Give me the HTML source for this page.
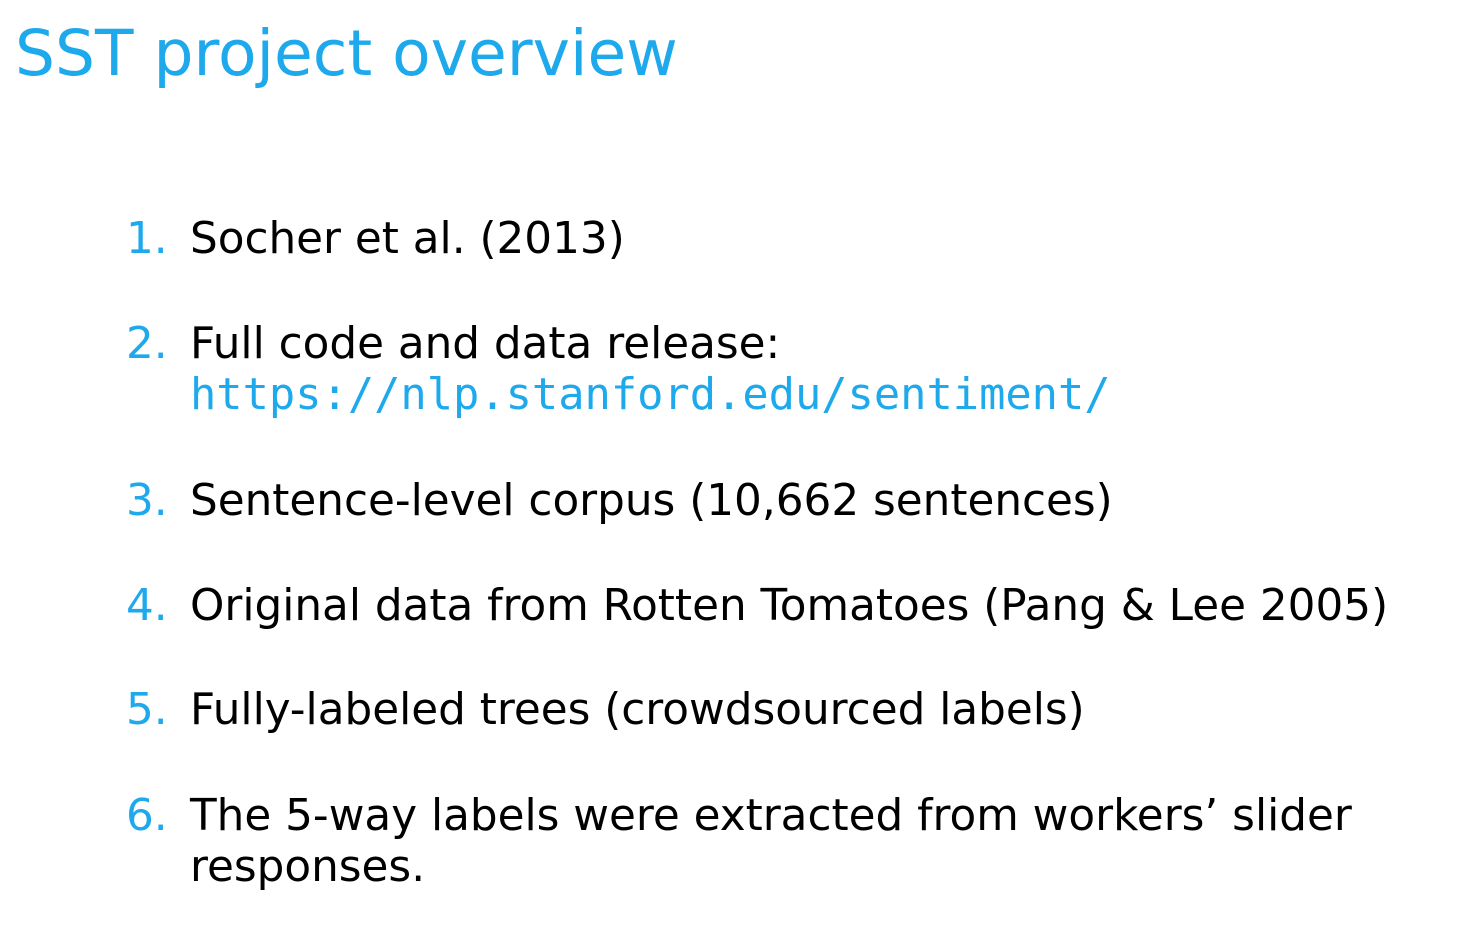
<!DOCTYPE html>
<html><head><meta charset="utf-8"><style>
html,body{margin:0;padding:0;background:#fff;width:1460px;height:940px;overflow:hidden}
body{position:relative;font-family:"DejaVu Sans","Liberation Sans",sans-serif;color:#000}
.t{position:absolute;left:15px;top:23px;font-size:63px;line-height:62px;color:#1da9ec;white-space:nowrap}
.l{position:absolute;font-size:43.7px;line-height:51px;white-space:nowrap}
.n{left:126px;color:#1da9ec}
.x{left:190px}
.m{font-family:"DejaVu Sans Mono","Liberation Mono",monospace;color:#1da9ec}
</style></head><body>
<div class="t">SST project overview</div>
<div class="l n" style="top:213px">1.</div><div class="l x" style="top:213px">Socher et al. (2013)</div>
<div class="l n" style="top:318px">2.</div><div class="l x" style="top:318px">Full code and data release:</div>
<div class="l x m" style="top:369px">https://nlp.stanford.edu/sentiment/</div>
<div class="l n" style="top:475px">3.</div><div class="l x" style="top:475px">Sentence-level corpus (10,662 sentences)</div>
<div class="l n" style="top:580px">4.</div><div class="l x" style="top:580px">Original data from Rotten Tomatoes (Pang &amp; Lee 2005)</div>
<div class="l n" style="top:684px">5.</div><div class="l x" style="top:684px">Fully-labeled trees (crowdsourced labels)</div>
<div class="l n" style="top:790px">6.</div><div class="l x" style="top:790px">The 5-way labels were extracted from workers’ slider</div>
<div class="l x" style="top:841px">responses.</div>
</body></html>
